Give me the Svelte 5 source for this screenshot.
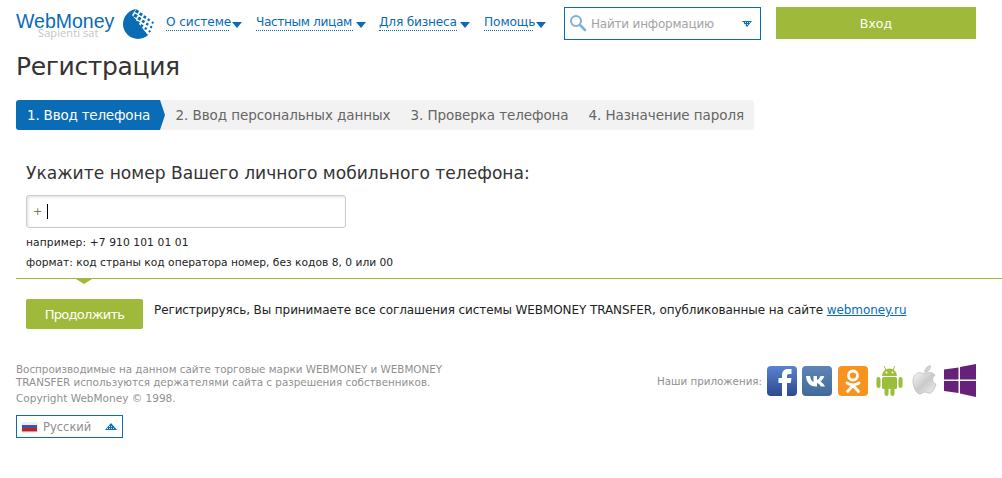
<script>
  const nav = [
    ['О системе', 63], ['Частным лицам', 97], ['Для бизнеса', 78], ['Помощь', 49]
  ];
  const steps = ['2. Ввод персональных данных', '3. Проверка телефона', '4. Назначение пароля'];
  const dots = [];
  for (let r = 0; r < 4; r++) for (let c = 0; c < 5; c++) {
    if (r === 3 && c === 4) continue;
    dots.push({ x: 14 + c * 3.9 - r * 1.5, y: 2.5 + c * 2.8 + r * 4.3, s: 3.4 - (c * 0.32) - Math.abs(r - 1) * 0.1 });
  }
</script>

<div class="page">
  <header class="top">
    <div class="brand">
      <div class="word">WebMoney</div>
      <div class="motto">Sapienti sat</div>
    </div>
    <svg class="globe" width="31" height="30" viewBox="0 0 31 30" aria-hidden="true">
      <circle cx="15" cy="15" r="15" fill="#0a6cb4" />
      <path d="M9 6 L13 0 L31 0 L31 30 L24 25 Z" fill="#fff" />
      {#each dots as d}
        <rect x={d.x - d.s / 2} y={d.y - d.s / 2} width={d.s} height={d.s} fill="#0a6cb4" transform="rotate(30 {d.x} {d.y})" />
      {/each}
    </svg>
    <nav class="menu">
      {#each nav as [label, w]}
        <div class="item">
          <span class="link" style="width:{w}px">{label}</span>
          <span class="caret"></span>
        </div>
      {/each}
    </nav>
    <div class="search">
      <svg width="18" height="18" viewBox="0 0 18 18" aria-hidden="true">
        <circle cx="7" cy="7" r="5" fill="none" stroke="#7fb0d6" stroke-width="2" />
        <path d="M11 11 L16 16" stroke="#7fb0d6" stroke-width="2.6" stroke-linecap="round" />
      </svg>
      <span class="ph">Найти информацию</span>
      <svg class="chev" width="10" height="6" viewBox="0 0 10 6" aria-hidden="true">
        <path d="M0 0H10L5 6Z" fill="#0a6cb4" />
        <path d="M1 1.500H9M3 3.500H7" stroke="#fff" stroke-width=".8" stroke-dasharray="1 1" />
      </svg>
    </div>
    <button class="login">Вход</button>
  </header>

  <h1>Регистрация</h1>

  <div class="steps">
    <div class="step active">1. Ввод телефона</div>
    {#each steps as s}
      <div class="step">{s}</div>
    {/each}
  </div>

  <h2>Укажите номер Вашего личного мобильного телефона:</h2>

  <div class="field"><span class="plus">+</span><span class="cursor"></span></div>
  <p class="hint first">например: +7 910 101 01 01</p>
  <p class="hint">формат: код страны код оператора номер, без кодов 8, 0 или 00</p>

  <div class="rule"><span class="notch"></span></div>

  <div class="submit">
    <button class="go">Продолжить</button>
    <p class="terms">Регистрируясь, Вы принимаете все соглашения системы WEBMONEY TRANSFER, опубликованные на сайте <span class="site">webmoney.ru</span></p>
  </div>

  <footer class="foot">
    <div class="legal">
      <p class="marks">Воспроизводимые на данном сайте торговые марки WEBMONEY и WEBMONEY TRANSFER используются держателями сайта с разрешения собственников.</p>
      <p class="copy">Copyright WebMoney © 1998.</p>
      <div class="lang">
        <span class="flag"></span>
        <span class="lname">Русский</span>
        <svg width="12" height="7" viewBox="0 0 12 7" aria-hidden="true">
          <path d="M6 0L12 7H0Z" fill="#0a6cb4" />
          <path d="M2 5.500H10M4 3.500H8" stroke="#fff" stroke-width=".8" stroke-dasharray="1 1" />
        </svg>
      </div>
    </div>
    <div class="apps">
      <span class="apps-label">Наши приложения:</span>
      <svg class="ic" width="30" height="30" viewBox="0 0 30 30" aria-label="Facebook">
        <defs><linearGradient id="fb" x1="0" y1="0" x2="0" y2="1"><stop offset="0" stop-color="#5b83cf" /><stop offset="1" stop-color="#2c4a8f" /></linearGradient></defs>
        <rect width="30" height="30" rx="4" fill="url(#fb)" />
        <path d="M15 30V17h-3.500v-5H15V9c0-4 2.500-6 6-6h3.500v5H22c-1.500 0-2 .7-2 2v2h4.500l-.8 5H20v13Z" fill="#fff" />
      </svg>
      <svg class="ic" width="30" height="30" viewBox="0 0 30 30" aria-label="VK">
        <defs><linearGradient id="vk" x1="0" y1="0" x2="0" y2="1"><stop offset="0" stop-color="#5d85b5" /><stop offset="1" stop-color="#3f6b9c" /></linearGradient></defs>
        <rect width="30" height="30" rx="4" fill="url(#vk)" />
        <path d="M4 10h4c.5 3 2 5.500 3.500 6V10h3.500v4c1.500-.5 3-2.500 3.500-4h3.800c-.6 2.500-2.300 4.500-3.800 5.500 1.800 1 3.500 2.800 4.500 5h-4.200c-.8-1.800-2.200-3.200-3.800-3.500v3.500h-1.500C8 20.500 4.500 16.500 4 10Z" fill="#fff" />
      </svg>
      <svg class="ic" width="30" height="30" viewBox="0 0 30 30" aria-label="Odnoklassniki">
        <rect width="30" height="30" rx="4" fill="#f7931e" />
        <circle cx="15" cy="9.500" r="4.500" fill="none" stroke="#fff" stroke-width="2.800" />
        <path d="M9 17c4 2.500 8 2.500 12 0M15 19v1M15 19.500l-5.500 6M15 19.500l5.500 6" fill="none" stroke="#fff" stroke-width="2.800" stroke-linecap="round" />
      </svg>
      <svg class="ic android" width="27" height="31" viewBox="0 0 27 31" aria-label="Android">
        <g fill="#9cbf3b">
          <path d="M6 11a7.500 7.500 0 0 1 15 0Z" />
          <rect x="6" y="12" width="15" height="12" rx="1.500" />
          <rect x="0.500" y="12" width="4" height="11" rx="2" />
          <rect x="22.500" y="12" width="4" height="11" rx="2" />
          <rect x="8.500" y="22" width="4" height="9" rx="2" />
          <rect x="14.500" y="22" width="4" height="9" rx="2" />
          <path d="M8 1l2 4M19 1l-2 4" stroke="#9cbf3b" stroke-width="1" />
        </g>
        <circle cx="10.500" cy="7.500" r="1" fill="#fff" />
        <circle cx="16.500" cy="7.500" r="1" fill="#fff" />
      </svg>
      <svg class="ic" width="25" height="31" viewBox="0 0 25 31" aria-label="Apple">
        <defs><linearGradient id="ap" x1="0" y1="0" x2="1" y2="1"><stop offset="0" stop-color="#f7f7f7" /><stop offset=".5" stop-color="#c9c9c9" /><stop offset="1" stop-color="#f0f0f0" /></linearGradient></defs>
        <path d="M12.500 9c2-1 4-1.800 6.500-1.300 1.800.3 3 1.300 4 2.500-3.600 2.300-3 7.500 1 9-1.300 3.800-3.800 9-6.500 9-1.800 0-2.800-1.200-4.700-1.200S9.500 29 8 29C4.500 29 1 21.500 1 16.500 1 10.500 5 7.500 8 7.700c1.800 0 3.300 1 4.500 1.300Z" fill="url(#ap)" stroke="#b5b5b5" stroke-width=".7" />
        <path d="M12.500 7.500C12.500 4 15 1 18.500.5 18.800 4 16 7.500 12.500 7.500Z" fill="#d2d2d2" stroke="#b5b5b5" stroke-width=".5" />
      </svg>
      <svg class="ic" width="32" height="33" viewBox="0 0 32 33" aria-label="Windows">
        <path d="M0 5.500L14.500 3.500V15.500H0ZM16 3L32 0V15.500H16ZM0 17H14.500V29L0 27ZM16 17H32V33L16 29.500Z" fill="#68217a" />
      </svg>
    </div>
  </footer>
</div>

<style>
  :global(body) { margin: 0; background: #fff; }
  .page { width: 1002px; height: 478px; overflow: hidden; font-family: "DejaVu Sans", Verdana, sans-serif; box-sizing: border-box; padding: 0 26px 0 16px; color: #333; }
  p { margin: 0; }

  .top { display: flex; align-items: flex-start; height: 47px; padding-top: 8px; box-sizing: border-box; }
  .brand { width: 107px; flex: none; }
  .word { font-family: "Liberation Sans", sans-serif; font-weight: 400; font-size: 19.500px; line-height: 18px; color: #0a6cb4; white-space: nowrap; margin-top: 4px; }
  .motto { font-family: "Open Sans", sans-serif; font-size: 11px; line-height: 7px; color: #c4c4c4; padding-left: 22px; margin-top: -1px; letter-spacing: 0.1px; }
  .globe { margin-top: 1px; flex: none; }
  .menu { display: flex; margin-left: 12px; margin-top: 7px; }
  .item { display: flex; align-items: center; }
  .item:nth-child(1) { width: 90px; }
  .item:nth-child(2) { width: 123px; }
  .item:nth-child(3) { width: 105px; }
  .item:nth-child(4) { width: 80px; }
  .link { display: block; font-size: 12.200px; line-height: 15px; height: 15px; color: #0a6cb4; border-bottom: 1px dotted #0a6cb4; white-space: nowrap; letter-spacing: -0.1px; }
  .item:nth-child(2) .link { letter-spacing: -0.4px; }
  .item:nth-child(3) .link { letter-spacing: -0.2px; }
  .caret { width: 0; height: 0; margin-left: 3px; margin-top: 3px; border-left: 5px solid transparent; border-right: 5px solid transparent; border-top: 6px solid #0a6cb4; }
  .search { width: 197px; height: 33px; box-sizing: border-box; border: 1px solid #0a6cb4; display: flex; align-items: center; padding: 0 8px 0 4px; flex: none; margin-top: -1px; }
  .search svg:first-child { margin-right: 4px; margin-top: -1px; flex: none; }
  .ph { font-size: 12px; color: #a3a3a3; flex: 1; letter-spacing: -0.2px; }
  .chev { flex: none; }
  .login { width: 200px; height: 32px; margin-left: 15px; flex: none; margin-top: -1px; background: #9fb93a; color: #fff; border: 0; font: 500 12.500px "DejaVu Sans", sans-serif; padding: 0; }

  h1 { font-family: "DejaVu Sans", sans-serif; font-weight: 400; font-size: 25px; line-height: 36px; margin: 2px 0 15px; color: #333; letter-spacing: -0.35px; }

  .steps { display: flex; width: 738px; height: 30px; background: #f2f2f2; border-radius: 3px; font-size: 13.500px; line-height: 30px; color: #666; white-space: nowrap; letter-spacing: -0.08px; }
  .step { padding: 0 10px; }
  .step.active { position: relative; width: 144px; box-sizing: border-box; padding: 0 0 0 11px; background: #0a6cb4; color: #fff; border-radius: 3px 0 0 3px; margin-right: 6px; letter-spacing: -0.2px; }
  .step.active::after { content: ""; position: absolute; left: 100%; top: 0; border-left: 5px solid #0a6cb4; border-top: 15px solid transparent; border-bottom: 15px solid transparent; }

  h2 { font-weight: 400; font-size: 17.100px; line-height: 22px; margin: 32px 0 0 10px; color: #333; white-space: nowrap; }

  .field { margin: 11px 0 0 10px; width: 320px; height: 33px; box-sizing: border-box; border: 1px solid #ccc; border-radius: 3px; box-shadow: inset 1px 1px 3px #ddd; display: flex; align-items: center; padding-left: 6px; color: #6d7f55; font-size: 11px; }
  .plus { line-height: 14px; }
  .cursor { display: block; width: 1px; height: 15px; background: #000; margin-left: 5px; }
  .hint { font-size: 10.700px; line-height: 14px; color: #222; margin-left: 10px; margin-top: 6px; white-space: nowrap; }
  .hint.first { margin-top: 8px; letter-spacing: 0.1px; }

  .rule { position: relative; height: 1px; background: #9fb93a; margin: 8px -26px 0 0; }
  .notch { position: absolute; left: 60px; top: 1px; border-top: 5px solid #9fb93a; border-left: 8px solid transparent; border-right: 8px solid transparent; }

  .submit { display: flex; align-items: flex-start; margin: 20px 0 0 10px; }
  .go { width: 117px; height: 30px; background: #9fb93a; color: #fff; border: 0; border-radius: 2px; font: 13px "DejaVu Sans", sans-serif; letter-spacing: -0.7px; padding: 0; flex: none; }
  .terms { font-size: 12px; line-height: 16px; color: #222; margin-left: 11px; margin-top: 3px; white-space: nowrap; letter-spacing: -0.09px; }
  .site { color: #0a6cb4; text-decoration: underline; }

  .foot { display: flex; justify-content: space-between; margin-top: 35px; }
  .legal { width: 440px; margin-top: -1px; }
  .marks { font-size: 10.350px; line-height: 13px; color: #8f8f8f; }
  .copy { font-size: 10.500px; line-height: 14px; color: #8f8f8f; margin-top: 2px; }
  .lang { display: flex; align-items: center; width: 107px; height: 23px; box-sizing: border-box; border: 1px solid #0a6cb4; margin-top: 10px; padding: 0 5px; color: #8f8f8f; font-size: 11.500px; }
  .flag { width: 15px; height: 9px; background: linear-gradient(#eee 33%, #3452b8 33%, #3452b8 66%, #c8201c 66%); box-shadow: 0 1px 1px #aaa; margin-right: 6px; }
  .lname { flex: 1; }
  .apps { display: flex; align-items: center; height: 33px; }
  .apps-label { font-size: 10.300px; color: #8f8f8f; margin-right: 5px; }
  .ic { flex: none; }
  .ic:nth-of-type(2) { margin-left: 5px; }
  .ic:nth-of-type(3) { margin-left: 6px; }
  .ic:nth-of-type(4) { margin-left: 8px; }
  .ic:nth-of-type(5) { margin-left: 9px; }
  .ic:nth-of-type(6) { margin-left: 7px; }
</style>
